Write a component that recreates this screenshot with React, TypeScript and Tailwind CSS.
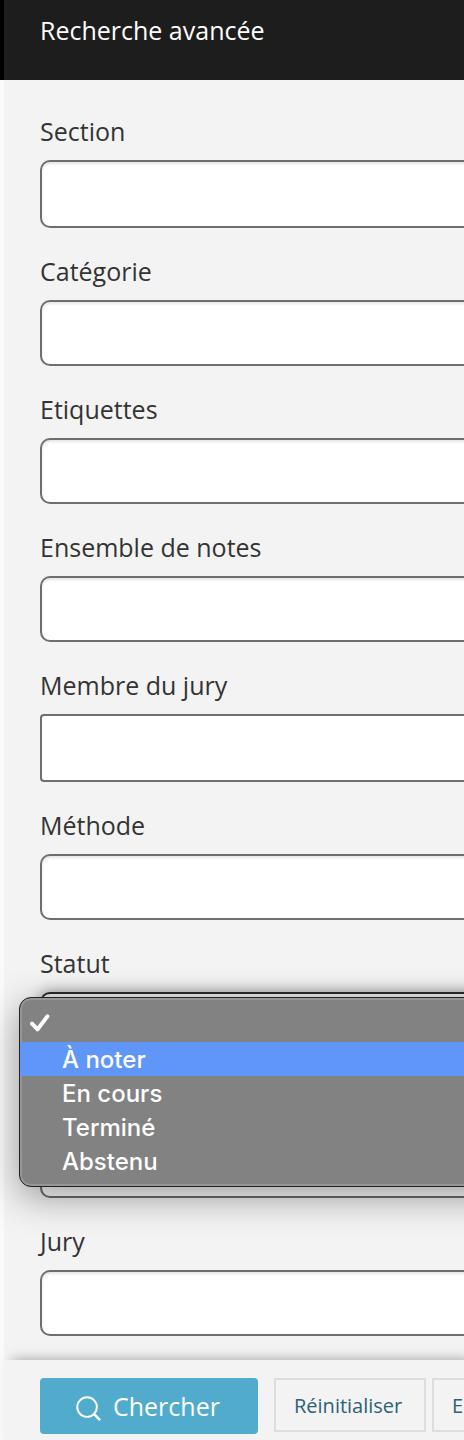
import { useState } from "react";
import clsx from "clsx";

type Field = { id: string; label: string; tall?: boolean; plain?: boolean };

const fieldsBefore: Field[] = [
  { id: "section", label: "Section", tall: true },
  { id: "categorie", label: "Catégorie" },
  { id: "etiquettes", label: "Etiquettes" },
  { id: "ensemble", label: "Ensemble de notes" },
  { id: "membre", label: "Membre du jury", tall: true, plain: true },
  { id: "methode", label: "Méthode" },
];

const statusOptions = ["", "À noter", "En cours", "Terminé", "Abstenu"];

function FieldLabel({ id, label }: { id: string; label: string }) {
  return (
    <label htmlFor={id} className="flex h-[72px] items-end pb-3 text-[25px] leading-[34px] text-[#333]">
      {label}
    </label>
  );
}

type BoxProps = { id: string; tall?: boolean; plain?: boolean; open?: boolean; name?: string };

function SelectBox({ id, tall, plain, open, name }: BoxProps) {
  const box = clsx(
    "block w-full appearance-none border-2 px-4 text-[25px] outline-none",
    tall ? "h-[68px]" : "h-[66px]",
    open ? "border-[#2a2a2a] bg-[#e8e6e8]" : "border-[#6e6e6e] bg-white",
    plain ? "rounded-[4px]" : "rounded-[10px]",
    open && "shadow-[0_0_14px_rgba(0,0,0,0.4)]",
    !plain && !open && "shadow-[inset_0_2px_3px_rgba(0,0,0,0.1)]",
  );
  return plain ? (
    <input id={id} type="text" className={box} />
  ) : (
    <select id={id} aria-label={name} className={box}>
      <option value="" />
    </select>
  );
}

function StatusMenu({ active, onPick }: { active: number; onPick: (i: number) => void }) {
  return (
    <div
      role="listbox"
      aria-labelledby="statut"
      className="absolute top-[5px] -left-[21px] z-10 w-full rounded-[12px] border border-[#222] bg-[#828282] pt-[10px] pb-2 shadow-[inset_0_0_0_2px_rgba(255,255,255,0.16),0_10px_36px_rgba(0,0,0,0.38)]"
      style={{ fontFamily: 'Inter, "Liberation Sans", sans-serif' }}
    >
      {statusOptions.map((option, i) => (
        <button
          key={i}
          type="button"
          role="option"
          aria-selected={i === 0}
          aria-label={option || undefined}
          onClick={() => onPick(i)}
          className={clsx(
            "flex h-[34px] w-full pl-[10px] text-left text-[24px] leading-[36px] font-medium text-white",
            i === active && "bg-[#6096f8]",
          )}
        >
          <span className="w-8 shrink-0 pt-[6px]">
            {i === 0 && (
              <svg width="20" height="18" viewBox="0 0 20 18" fill="none" aria-hidden="true">
                <path d="M2 9.6 L7.6 15.4 L17.4 2.4" stroke="white" strokeWidth="4" strokeLinecap="round" strokeLinejoin="round" />
              </svg>
            )}
          </span>
          {option}
        </button>
      ))}
    </div>
  );
}

export default function App() {
  const [active, setActive] = useState(1);
  return (
    <div
      className="flex min-h-screen flex-col overflow-hidden bg-[#f3f3f3]"
      style={{ fontFamily: '"Open Sans", "Noto Sans", sans-serif' }}
    >
      <header className="h-20 border-l-4 border-black bg-[#1d1d1d] pt-[13px] pl-9">
        <h1 className="text-[25px] leading-[34px] font-[450] text-white">Recherche avancée</h1>
      </header>

      <div className="flex grow flex-col border-l-4 border-[#fafafa]">
        <form className="-mr-20 grow pt-2 pb-6 pl-9">
          {fieldsBefore.map((f) => (
            <div key={f.id}>
              <FieldLabel id={f.id} label={f.label} />
              <SelectBox id={f.id} tall={f.tall} plain={f.plain} />
            </div>
          ))}
          <div>
            <FieldLabel id="statut" label="Statut" />
            <div className="relative">
              <SelectBox id="statut" tall open />
              <StatusMenu active={active} onPick={setActive} />
            </div>
          </div>
          <div className="pt-[72px]">
            <SelectBox id="type" name="Type" />
          </div>
          <div>
            <FieldLabel id="jury" label="Jury" />
            <SelectBox id="jury" />
          </div>
        </form>

        <footer className="flex h-20 items-start bg-[#f3f3f3] pt-[18px] pl-9 shadow-[8px_0_12px_rgba(0,0,0,0.35)]">
          <button
            type="button"
            className="flex h-14 w-[218px] shrink-0 items-center rounded-[4px] bg-[#51abcc] pl-9 text-[25px] leading-[34px] text-white"
          >
            <svg className="mr-3 mt-1" width="25" height="25" viewBox="0 0 26 26" fill="none" stroke="white" strokeWidth="2" aria-hidden="true">
              <circle cx="11.5" cy="11.5" r="10.2" />
              <path d="M18.6 18.6 L25 25" strokeWidth="2.6" />
            </svg>
            Chercher
          </button>
          <button
            type="button"
            className="ml-4 h-[54px] w-[152px] shrink-0 border-2 border-[#ddd] pt-[2px] pl-[18px] text-left text-[20px] leading-[28px] text-[#2b6274]"
          >
            Réinitialiser
          </button>
          <button
            type="button"
            className="ml-[6px] h-[54px] w-[152px] shrink-0 border-2 border-[#ddd] pt-[2px] pl-[18px] text-left text-[20px] leading-[28px] text-[#2b6274]"
          >
            E
          </button>
        </footer>
      </div>
    </div>
  );
}
